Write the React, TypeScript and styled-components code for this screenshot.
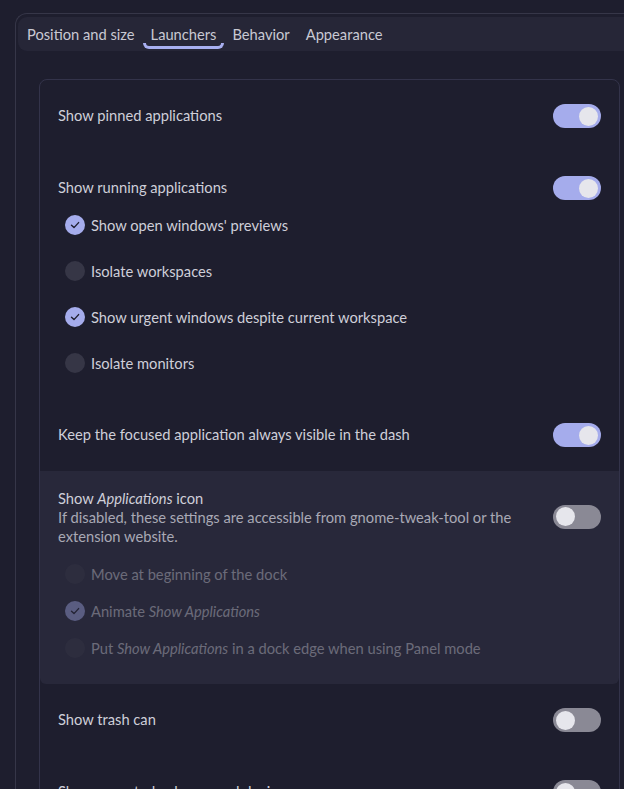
import React from "react";
import styled, { createGlobalStyle, css } from "styled-components";

const Global = createGlobalStyle`
  html, body { margin: 0; padding: 0; }
  body {
    background: #1e1e2e;
    font-family: Lato, "Noto Sans", sans-serif;
    color: #cfcfd9;
    width: 624px;
    height: 789px;
    overflow: hidden;
  }
`;

const Frame = styled.div`
  margin: 13px 0 0 15px;
  border: 1px solid #363648;
  border-right: none;
  border-radius: 12px 0 0 0;
  padding: 3px 0 0 2px;
  height: 900px;
  box-sizing: border-box;
`;

const TabBar = styled.div`
  display: flex;
  align-items: stretch;
  height: 34px;
  background: #262637;
  border-radius: 9px 0 0 9px;
  padding-left: 1px;
`;

const Tab = styled.div<{ $active?: boolean }>`
  position: relative;
  display: flex;
  align-items: center;
  padding: 0 8px;
  font-size: 14.7px;
  color: #c9c9d3;
  ${(p) =>
    p.$active &&
    css`
      &::after {
        content: "";
        position: absolute;
        left: 0;
        right: 0;
        bottom: 2px;
        height: 6px;
        border: 3px solid #a8aff0;
        border-top: none;
        border-radius: 0 0 6px 6px;
        box-sizing: border-box;
      }
    `}
`;

const Content = styled.div`
  padding: 28px 0 0 21px;
`;

const Card = styled.div`
  border: 1px solid #33334a;
  border-radius: 8px;
  width: 579px;
`;

const Row = styled.div<{ $tight?: boolean }>`
  padding: 24px 18px ${(p) => (p.$tight ? 13 : 24)}px 18px;
`;

const RowHead = styled.div`
  display: flex;
  align-items: center;
  justify-content: space-between;
  min-height: 24px;
`;

const Title = styled.div`
  font-size: 14.7px;
  line-height: 19px;
  color: #cfcfd9;
  position: relative;
  top: -1px;
`;

const BlockTitle = styled.div`
  font-size: 14.7px;
  line-height: 19px;
  color: #cfcfd9;
`;

const Subtitle = styled.div`
  font-size: 14.7px;
  line-height: 19px;
  color: #a9a9b5;
`;

const TextBlock = styled.div`
  max-width: 470px;
  position: relative;
  top: 1px;
`;

const SwitchTrack = styled.div<{ $on?: boolean }>`
  flex: none;
  width: 48px;
  height: 24px;
  border-radius: 12px;
  background: ${(p) => (p.$on ? "#a5acec" : "#8a8995")};
  display: flex;
  align-items: center;
  justify-content: ${(p) => (p.$on ? "flex-end" : "flex-start")};
  padding: 0 3px;
  box-sizing: border-box;
`;

const Knob = styled.div`
  width: 19px;
  height: 19px;
  border-radius: 50%;
  background: #e6e6ec;
`;

const CheckList = styled.div<{ $disabled?: boolean; $top: number }>`
  display: flex;
  flex-direction: column;
  padding-left: 7px;
  margin-top: ${(p) => p.$top}px;
  ${(p) => p.$disabled && css`opacity: 0.4;`}
`;

const CheckItem = styled.div<{ $h: number }>`
  display: flex;
  align-items: center;
  gap: 6px;
  height: ${(p) => p.$h}px;
  font-size: 14.7px;
  color: #cfcfd9;
`;

const Circle = styled.div<{ $on?: boolean }>`
  width: 20px;
  height: 20px;
  border-radius: 50%;
  background: ${(p) => (p.$on ? "#a5acec" : "#363646")};
  display: flex;
  align-items: center;
  justify-content: center;
  flex: none;
`;

const Highlight = styled.div`
  background: #28283a;
  border-radius: 0 0 6px 6px;
  padding: 17px 18px 18px 18px;
`;

const Switch = ({ on }: { on?: boolean }) => (
  <SwitchTrack $on={on}>
    <Knob />
  </SwitchTrack>
);

const Check = ({ on, h, children }: { on?: boolean; h: number; children: React.ReactNode }) => (
  <CheckItem $h={h}>
    <Circle $on={on}>
      {on && (
        <svg width="12" height="12" viewBox="0 0 12 12">
          <path d="M2.5 6.2 L5 8.6 L9.6 3.6" fill="none" stroke="#1e1e2e" strokeWidth="1.4" strokeLinecap="round" strokeLinejoin="round" />
        </svg>
      )}
    </Circle>
    <span>{children}</span>
  </CheckItem>
);

export default function App() {
  return (
    <>
      <Global />
      <Frame>
        <TabBar>
          <Tab>Position and size</Tab>
          <Tab $active>Launchers</Tab>
          <Tab>Behavior</Tab>
          <Tab>Appearance</Tab>
        </TabBar>
        <Content>
          <Card>
            <Row>
              <RowHead>
                <Title>Show pinned applications</Title>
                <Switch on />
              </RowHead>
            </Row>
            <Row $tight>
              <RowHead>
                <Title>Show running applications</Title>
                <Switch on />
              </RowHead>
              <CheckList $top={2}>
                <Check on h={46}>Show open windows' previews</Check>
                <Check h={46}>Isolate workspaces</Check>
                <Check on h={46}>Show urgent windows despite current workspace</Check>
                <Check h={46}>Isolate monitors</Check>
              </CheckList>
            </Row>
            <Row>
              <RowHead>
                <Title>Keep the focused application always visible in the dash</Title>
                <Switch on />
              </RowHead>
            </Row>
            <Highlight>
              <RowHead>
                <TextBlock>
                  <BlockTitle>
                    Show <i>Applications</i> icon
                  </BlockTitle>
                  <Subtitle>
                    If disabled, these settings are accessible from gnome-tweak-tool or the extension website.
                  </Subtitle>
                </TextBlock>
                <Switch />
              </RowHead>
              <CheckList $disabled $top={10}>
                <Check h={37}>Move at beginning of the dock</Check>
                <Check on h={37}>
                  Animate <i>Show Applications</i>
                </Check>
                <Check h={37}>
                  Put <i>Show Applications</i> in a dock edge when using Panel mode
                </Check>
              </CheckList>
            </Highlight>
            <Row>
              <RowHead>
                <Title>Show trash can</Title>
                <Switch />
              </RowHead>
            </Row>
            <Row>
              <RowHead>
                <Title>Show mounted volumes and devices</Title>
                <Switch />
              </RowHead>
            </Row>
          </Card>
        </Content>
      </Frame>
    </>
  );
}
